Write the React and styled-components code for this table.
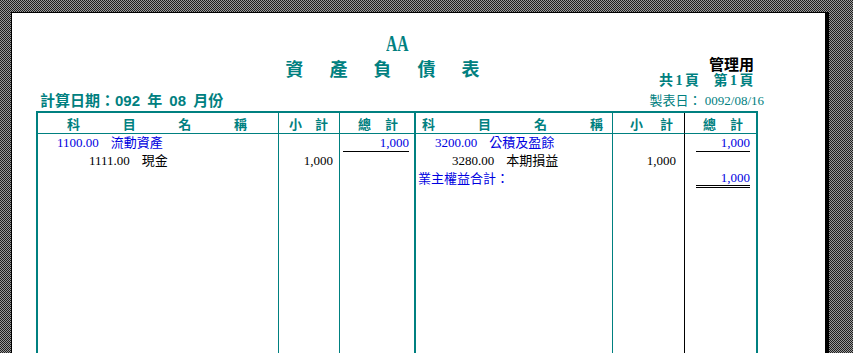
import React from 'react';
import styled, { createGlobalStyle } from 'styled-components';

const TEAL = '#008080';
const BLUE = '#0000e0';
const SERIF = '"Liberation Serif", "Noto Sans CJK TC", serif';
const CJK = '"Noto Sans CJK TC", "Liberation Sans", sans-serif';
const SANS = '"Liberation Sans", "Noto Sans CJK TC", sans-serif';

const GlobalStyle = createGlobalStyle`
  html, body {
    margin: 0;
    height: 100%;
    overflow: hidden;
  }
  body {
    background: repeating-conic-gradient(#9a9a9a 0 25%, #1e1e1e 0 50%) 0 0 / 2px 2px;
    font-family: ${SERIF};
  }
`;

const Page = styled.div`
  box-sizing: border-box;
  width: 818px;
  height: 420px;
  margin: 12px 0 0 11px;
  padding: 17px 0 0 24px;
  background: #fff;
  border-left: 1px solid #000;
  border-top: 1px solid #000;
  border-right: 4px solid #000;
`;

const Sheet = styled.div`
  width: 722px;
`;

const Company = styled.div`
  height: 25px;
  line-height: 25px;
  text-align: center;
  font: bold 24px "Liberation Serif", serif;
  color: ${TEAL};
  span {
    display: inline-block;
    transform: scaleX(0.65);
  }
`;

const TitleBand = styled.div`
  display: grid;
  grid-template-columns: 1fr auto 1fr;
`;

const Title = styled.div`
  grid-column: 2;
  line-height: 24px;
  font: 600 18px ${CJK};
  letter-spacing: 26px;
  color: ${TEAL};
  white-space: nowrap;
  margin-left: -3px;
`;

const Corner = styled.div`
  display: flex;
  flex-direction: column;
  align-items: flex-end;
  padding-right: 4px;
`;

const Usage = styled.div`
  font: bold 15px ${CJK};
  line-height: 18px;
  color: #000;
`;

const PageCount = styled.div`
  font: bold 14px ${SERIF};
  line-height: 16px;
  letter-spacing: 2.5px;
  margin-right: -2px;
  white-space: pre;
  color: ${TEAL};
`;

const DateRow = styled.div`
  display: flex;
  justify-content: space-between;
  align-items: center;
  height: 20px;
  margin-bottom: 2px;
`;

const Period = styled.div`
  padding-left: 4px;
  font: bold 15px ${SANS};
  word-spacing: 3px;
  color: ${TEAL};
`;

const Issued = styled.div`
  margin-right: -6px;
  font: 13px ${SERIF};
  white-space: pre;
  color: ${TEAL};
`;

const RULES = {
  thin: `1px solid ${TEAL}`,
  thick: `2px solid ${TEAL}`,
  black: '1px solid #000',
  none: 'none',
};

const Ledger = styled.div`
  display: grid;
  grid-template-columns: 241px 61px 76px 197px 72px 71px;
  grid-template-rows: 21px 240px;
  border: 2px solid ${TEAL};
  border-bottom: none;
`;

const HeadCell = styled.div`
  display: flex;
  justify-content: space-between;
  align-items: center;
  padding: 0 ${(p) => p.$pr}px 0 ${(p) => p.$pl}px;
  border-bottom: 1px solid ${TEAL};
  border-right: ${(p) => RULES[p.$rule]};
  font: bold 13px ${CJK};
  color: ${TEAL};
`;

const BodyCell = styled.div`
  display: flex;
  flex-direction: column;
  border-right: ${(p) => RULES[p.$rule]};
`;

const Line = styled.div`
  display: flex;
  justify-content: ${(p) => (p.$right ? 'flex-end' : 'flex-start')};
  height: 18px;
  line-height: 18px;
  padding-left: ${(p) => p.$indent || 0}px;
  padding-right: ${(p) => p.$pad || 0}px;
  font-size: 13px;
  white-space: nowrap;
  color: ${(p) => (p.$blue ? BLUE : '#000')};
`;

const AccountNo = styled.span`
  margin-right: 12px;
`;

const Amount = styled.span`
  ${(p) =>
    p.$rule &&
    `
    flex: 1;
    margin-left: ${p.$from}px;
    text-align: right;
    border-bottom: ${p.$rule === 'double' ? '3px double #000' : '1px solid #000'};
    line-height: ${p.$rule === 'double' ? 15 : 17}px;
  `}
`;

const columns = [
  { rule: 'thin', heads: ['科', '目', '名', '稱'], pl: 29, pr: 31 },
  { rule: 'thin', heads: ['小', '計'], pl: 10, pr: 11 },
  { rule: 'thick', heads: ['總', '計'], pl: 18, pr: 16 },
  { rule: 'thin', heads: ['科', '目', '名', '稱'], pl: 6, pr: 9 },
  { rule: 'black', heads: ['小', '計'], pl: 17, pr: 11 },
  { rule: 'none', heads: ['總', '計'], pl: 18, pr: 13 },
];

const bodies = [
  <>
    <Line $indent={19} $blue>
      <AccountNo>1100.00</AccountNo>流動資產
    </Line>
    <Line $indent={51}>
      <AccountNo>1111.00</AccountNo>現金
    </Line>
  </>,
  <>
    <Line />
    <Line $right $pad={6}>1,000</Line>
  </>,
  <>
    <Line $right $pad={5} $blue>
      <Amount $rule="single" $from={3}>1,000</Amount>
    </Line>
  </>,
  <>
    <Line $indent={19} $blue>
      <AccountNo>3200.00</AccountNo>公積及盈餘
    </Line>
    <Line $indent={36}>
      <AccountNo>3280.00</AccountNo>本期損益
    </Line>
    <Line $indent={2} $blue>業主權益合計：</Line>
  </>,
  <>
    <Line />
    <Line $right $pad={8}>1,000</Line>
  </>,
  <>
    <Line $right $pad={6} $blue>
      <Amount $rule="single" $from={11}>1,000</Amount>
    </Line>
    <Line />
    <Line $right $pad={6} $blue>
      <Amount $rule="double" $from={11}>1,000</Amount>
    </Line>
  </>,
];

const App = () => {
  return (
    <>
      <GlobalStyle />
      <Page>
        <Sheet>
          <Company>
            <span>AA</span>
          </Company>
          <TitleBand>
            <Title>資產負債表</Title>
            <Corner>
              <Usage>管理用</Usage>
              <PageCount>{'共1頁  第1頁'}</PageCount>
            </Corner>
          </TitleBand>
          <DateRow>
            <Period>計算日期：092 年 08 月份</Period>
            <Issued>{'製表日： 0092/08/16'}</Issued>
          </DateRow>
          <Ledger>
            {columns.map((col, i) => (
              <HeadCell key={`h${i}`} $rule={col.rule} $pl={col.pl} $pr={col.pr}>
                {col.heads.map((h, j) => (
                  <span key={j}>{h}</span>
                ))}
              </HeadCell>
            ))}
            {columns.map((col, i) => (
              <BodyCell key={`b${i}`} $rule={col.rule}>
                {bodies[i]}
              </BodyCell>
            ))}
          </Ledger>
        </Sheet>
      </Page>
    </>
  );
};

export default App;
